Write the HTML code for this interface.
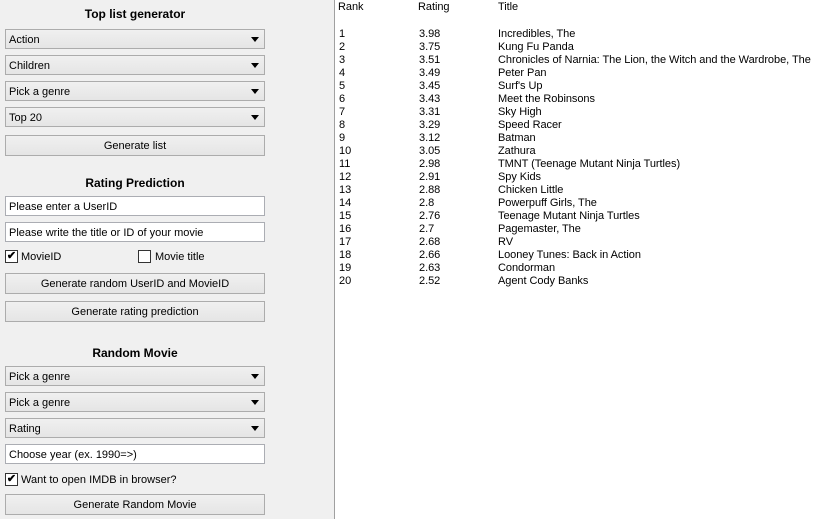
<!DOCTYPE html>
<html><head><style>
body{margin:0;width:825px;height:519px;overflow:hidden;font-family:"Liberation Sans",sans-serif;font-size:11px;color:#000;background:#fff;position:relative}
#left{position:absolute;left:0;top:0;width:334px;height:519px;background:#f0f0f0;border-right:1px solid #a0a0a0}
.a{position:absolute}
.t{left:0;width:270px;text-align:center;font-weight:bold;font-size:12px}
.cb{left:5px;height:18px;border:1px solid #acacac;background:linear-gradient(#f0f0f0,#e5e5e5);line-height:20px;padding-left:3px;width:255px}
.cb:after{content:"";position:absolute;right:5px;top:7px;border-left:4px solid transparent;border-right:4px solid transparent;border-top:5px solid #000}
.in{left:5px;width:255px;height:18px;border:1px solid #abadb3;background:#fff;line-height:20px;padding-left:3px}
.bt{left:5px;width:258px;height:19px;border:1px solid #acacac;background:linear-gradient(#f0f0f0,#e5e5e5);line-height:21px;text-align:center}
.ck{width:11px;height:11px;border:1px solid #333;background:#fff;font-size:11px;line-height:11px;text-align:center;font-weight:bold}
.r{position:absolute;white-space:nowrap;letter-spacing:-0.05px}
</style></head><body>
<div id="left">
<div class="a t" style="top:7px">Top list generator</div>
<div class="a cb" style="top:29px">Action</div>
<div class="a cb" style="top:55px">Children</div>
<div class="a cb" style="top:81px">Pick a genre</div>
<div class="a cb" style="top:107px">Top 20</div>
<div class="a bt" style="top:135px">Generate list</div>
<div class="a t" style="top:176px">Rating Prediction</div>
<div class="a in" style="top:196px">Please enter a UserID</div>
<div class="a in" style="top:222px">Please write the title or ID of your movie</div>
<div class="a ck" style="left:5px;top:250px">✔</div><div class="a" style="left:21px;top:251px">MovieID</div>
<div class="a ck" style="left:138px;top:250px"></div><div class="a" style="left:155px;top:251px">Movie title</div>
<div class="a bt" style="top:273px">Generate random UserID and MovieID</div>
<div class="a bt" style="top:301px">Generate rating prediction</div>
<div class="a t" style="top:346px">Random Movie</div>
<div class="a cb" style="top:366px">Pick a genre</div>
<div class="a cb" style="top:392px">Pick a genre</div>
<div class="a cb" style="top:418px">Rating</div>
<div class="a in" style="top:444px">Choose year (ex. 1990=>)</div>
<div class="a ck" style="left:5px;top:473px">✔</div><div class="a" style="left:21px;top:474px">Want to open IMDB in browser?</div>
<div class="a bt" style="top:494px">Generate Random Movie</div>
</div>
<div class="r" style="left:338px;top:1px">Rank</div><div class="r" style="left:418px;top:1px">Rating</div><div class="r" style="left:498px;top:1px">Title</div>
<div id="rows"></div>
<script>
var d=[["3.98","Incredibles, The"],["3.75","Kung Fu Panda"],["3.51","Chronicles of Narnia: The Lion, the Witch and the Wardrobe, The"],["3.49","Peter Pan"],["3.45","Surf's Up"],["3.43","Meet the Robinsons"],["3.31","Sky High"],["3.29","Speed Racer"],["3.12","Batman"],["3.05","Zathura"],["2.98","TMNT (Teenage Mutant Ninja Turtles)"],["2.91","Spy Kids"],["2.88","Chicken Little"],["2.8","Powerpuff Girls, The"],["2.76","Teenage Mutant Ninja Turtles"],["2.7","Pagemaster, The"],["2.68","RV"],["2.66","Looney Tunes: Back in Action"],["2.63","Condorman"],["2.52","Agent Cody Banks"]];
var h="";d.forEach(function(x,i){var y=28+i*13;h+='<div class="r" style="left:339px;top:'+y+'px">'+(i+1)+'</div><div class="r" style="left:419px;top:'+y+'px">'+x[0]+'</div><div class="r" style="left:498px;top:'+y+'px">'+x[1]+'</div>';});
document.getElementById("rows").innerHTML=h;
</script>
</body></html>
